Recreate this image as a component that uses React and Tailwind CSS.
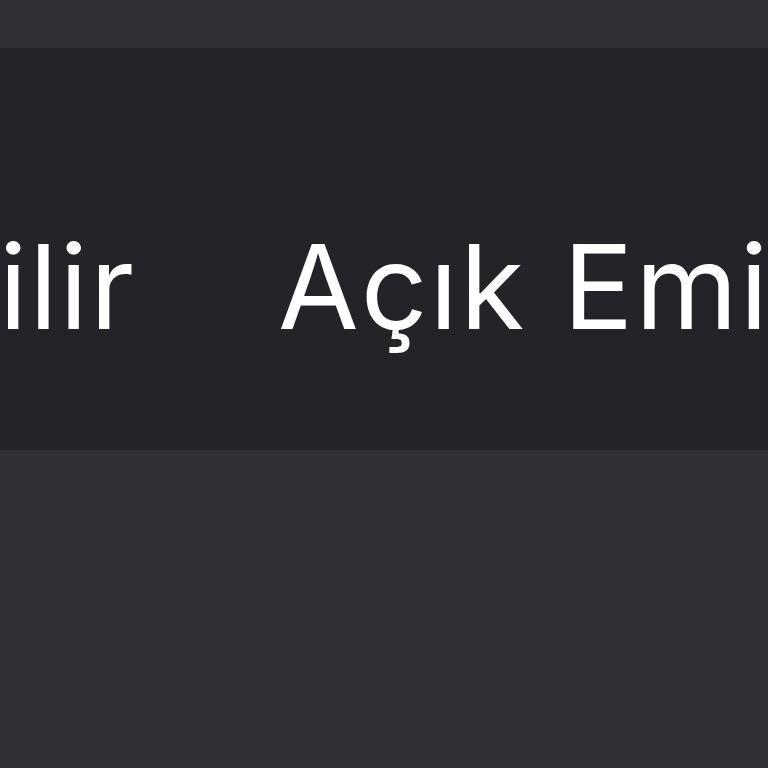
import React from "react";

const tabs = ["Çekilebilir", "Açık Emirler"];

export default function App() {
  return (
    <div className="w-[768px] h-[768px] overflow-hidden bg-[#2f3035] font-['Inter','Noto_Sans',sans-serif]">
      {/* top strip */}
      <div className="h-[48px] bg-[#303136]" />

      {/* tab band */}
      <div className="h-[402px] bg-[#232428] flex items-start pt-[180px] overflow-hidden whitespace-nowrap text-white text-[117px] leading-none tracking-[2px] [word-spacing:2px]">
        <div className="w-[136px] shrink-0 flex justify-end overflow-hidden">
          <span>{tabs[0]}</span>
        </div>
        <div className="ml-[142px] shrink-0">
          <span>{tabs[1]}</span>
        </div>
      </div>
    </div>
  );
}
